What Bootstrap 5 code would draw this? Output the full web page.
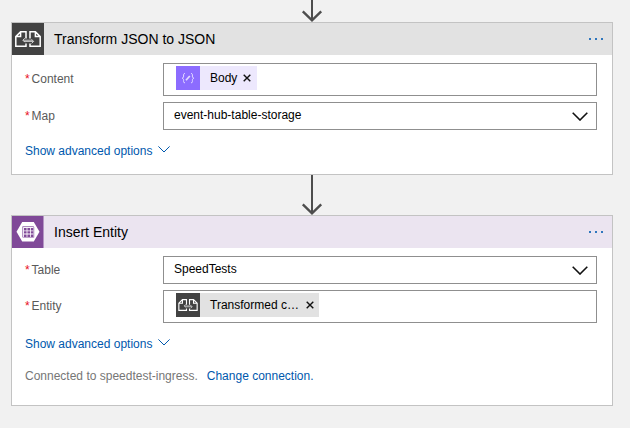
<!DOCTYPE html>
<html lang="en">
<head>
<meta charset="utf-8">
<meta name="viewport" content="width=device-width, initial-scale=1">
<title>Logic app designer</title>
<link href="https://cdn.jsdelivr.net/npm/bootstrap@5.3.0/dist/css/bootstrap.min.css" rel="stylesheet">
<style>
body{background:#f1f1f1;font-family:"Liberation Sans",Arial,sans-serif;font-size:12px;line-height:16px;color:#000;height:428px;overflow:hidden}
.flow{width:602px;margin-left:11px}
.link-arrow{height:40px}
.link-arrow.first{height:22px}
.link-arrow svg,.step svg{display:block;flex:none}
.step{border:1px solid #c3c3c3;background:#fff}
.step-head{height:32px;background:#e2e2e2;font-size:14px}
.step-head.violet{background:#ebe4f0}
.step-title{margin-left:10px}
.dots{gap:4px;margin-right:9px}
.dots i{width:2px;height:2px;background:#2f76bd}
.fields{padding:8px 15px 0 13px;gap:6px}
.lbl{width:138px;color:#5a5a5a}
.lbl.tall{padding-bottom:2px}
.lbl b{color:#e81123;font-weight:400;display:inline-block;width:6.6px}
.box{height:33px;border:1px solid #8f8f8f;padding:0 8px 0 12px}
.box.select{height:28px;padding:0 8px 0 10px}
.select .val{padding-bottom:2px}
.token{height:24px;background:#ede8fd;margin-bottom:3px}
.token.grey{background:#e2e2e2}
.token-txt{margin-left:10px}
.token .x{margin:0 6px 0 6px}
.token.grey .x{margin:0 5px 0 7px}
.adv{color:#0058ad;padding-left:13px;margin-top:13px;gap:6px}
.adv svg{margin-top:-4px}
.conn{padding-left:13px;margin-top:16px;color:#767676;gap:9px}
.conn a{color:#0058ad}
.s1{height:153px}.s2{height:191px}
</style>
</head>
<body>
<svg width="0" height="0" class="position-absolute">
 <symbol id="transform" viewBox="0 0 32 32">
  <rect width="32" height="32" fill="#424242"/>
  <g fill="none" stroke="#fff" stroke-width="1.5">
   <path d="M14 15.5V8.8H8.6L3.8 13.6V23.2H14V20.5M8.6 8.8V13.6H3.8"/>
   <path d="M18 15.5V8.8H23.4L28.2 13.6V23.2H18V20.5M23.4 8.8V13.6H28.2"/>
  </g>
  <path d="M11 17.2H20.5M12.8 15.2L10.8 17.2L12.8 19.2M12 18.4H21.5M19.6 16.4L21.6 18.4L19.6 20.4" fill="none" stroke="#ddd" stroke-width=".9"/>
 </symbol>
 <symbol id="chev" viewBox="0 0 16 9"><path d="M.7.8L8 8L15.3.8" fill="none" stroke="#111" stroke-width="1.6"/></symbol>
 <symbol id="chev-thin" viewBox="0 0 12 7"><path d="M.4.4L6 6L11.6.4" fill="none" stroke="#0058ad" stroke-width="1"/></symbol>
 <symbol id="cross" viewBox="0 0 8 8"><path d="M.7.7L7.3 7.3M7.3.7L.7 7.3" fill="none" stroke="#111" stroke-width="1.4"/></symbol>
</svg>
<main class="flow">
 <div class="link-arrow first d-flex justify-content-center">
  <svg width="22" height="22" viewBox="0 0 22 22" fill="none" stroke="#4d4d4d" stroke-width="2"><path d="M11 0V20"/><path d="M1.8 11.3L11 20.3L20.2 11.3" stroke-width="2.4"/></svg>
 </div>
 <section class="step s1">
  <header class="step-head d-flex align-items-center">
   <svg width="32" height="32"><use href="#transform"/></svg>
   <span class="step-title me-auto">Transform JSON to JSON</span>
   <span class="dots d-flex"><i></i><i></i><i></i></span>
  </header>
  <div class="fields d-flex flex-column">
   <div class="d-flex align-items-center">
    <div class="lbl tall"><b>*</b>Content</div>
    <div class="box d-flex align-items-center flex-fill">
     <span class="token d-flex align-items-center">
      <svg width="24" height="24" viewBox="0 0 24 24"><rect width="24" height="24" fill="#8c6cff"/><g fill="none" stroke="#e4dcff" stroke-width="1"><path d="M9 7.5C7.3 7.5 7.6 8.5 7.6 10C7.6 11.5 7.2 12 6 12.2C7.2 12.4 7.6 13 7.6 14.4C7.6 16 7.3 16.8 9 16.8M15 7.5C16.7 7.5 16.4 8.5 16.4 10C16.4 11.5 16.8 12 18 12.2C16.8 12.4 16.4 13 16.4 14.4C16.4 16 16.7 16.8 15 16.8"/><path d="M10 14.3L13.8 10" stroke-width="1.7"/></g></svg>
      <span class="token-txt">Body</span>
      <svg class="x" width="8" height="8"><use href="#cross"/></svg>
     </span>
    </div>
   </div>
   <div class="d-flex align-items-center">
    <div class="lbl"><b>*</b>Map</div>
    <div class="box select d-flex align-items-center flex-fill">
     <span class="val me-auto">event-hub-table-storage</span>
     <svg width="16" height="9"><use href="#chev"/></svg>
    </div>
   </div>
  </div>
  <div class="adv d-flex align-items-center"><span>Show advanced options</span><svg width="12" height="7"><use href="#chev-thin"/></svg></div>
 </section>
 <div class="link-arrow d-flex justify-content-center">
  <svg width="22" height="40" viewBox="0 0 22 40" fill="none" stroke="#4d4d4d" stroke-width="2"><path d="M11 0V38"/><path d="M1.8 29.3L11 38.3L20.2 29.3" stroke-width="2.4"/></svg>
 </div>
 <section class="step s2">
  <header class="step-head violet d-flex align-items-center">
   <svg width="32" height="32" viewBox="0 0 32 32"><rect width="31.5" height="32" fill="#804998"/><path d="M10.2 6H21.8L27.5 15.7L21.8 25.5H10.2L4.5 15.7Z" fill="#fff"/><path d="M10.7 21.4V10.6H21.8" fill="none" stroke="#a67fb8" stroke-width="1"/><path d="M12 12h2.6v2.4H12zM15.4 12H18v2.4h-2.6zM18.8 12h2.6v2.4h-2.6zM12 15.2h2.6v2.4H12zM15.4 15.2H18v2.4h-2.6zM18.8 15.2h2.6v2.4h-2.6zM12 18.4h2.6v2.6H12zM15.4 18.4H18V21h-2.6zM18.8 18.4h2.6V21h-2.6z" fill="#804998"/><path d="M11.2 21.4H21.8V11" fill="none" stroke="#a67fb8" stroke-width=".8"/></svg>
   <span class="step-title me-auto">Insert Entity</span>
   <span class="dots d-flex"><i></i><i></i><i></i></span>
  </header>
  <div class="fields d-flex flex-column">
   <div class="d-flex align-items-center">
    <div class="lbl"><b>*</b>Table</div>
    <div class="box select d-flex align-items-center flex-fill">
     <span class="val me-auto">SpeedTests</span>
     <svg width="16" height="9"><use href="#chev"/></svg>
    </div>
   </div>
   <div class="d-flex align-items-center">
    <div class="lbl tall"><b>*</b>Entity</div>
    <div class="box d-flex align-items-center flex-fill">
     <span class="token grey d-flex align-items-center">
      <svg width="24" height="24"><use href="#transform"/></svg>
      <span class="token-txt">Transformed c…</span>
      <svg class="x" width="8" height="8"><use href="#cross"/></svg>
     </span>
    </div>
   </div>
  </div>
  <div class="adv d-flex align-items-center"><span>Show advanced options</span><svg width="12" height="7"><use href="#chev-thin"/></svg></div>
  <div class="conn d-flex"><span>Connected to speedtest-ingress.</span><a href="#" class="text-decoration-none">Change connection.</a></div>
 </section>
</main>
<script src="https://cdn.jsdelivr.net/npm/bootstrap@5.3.0/dist/js/bootstrap.bundle.min.js"></script>
</body>
</html>
